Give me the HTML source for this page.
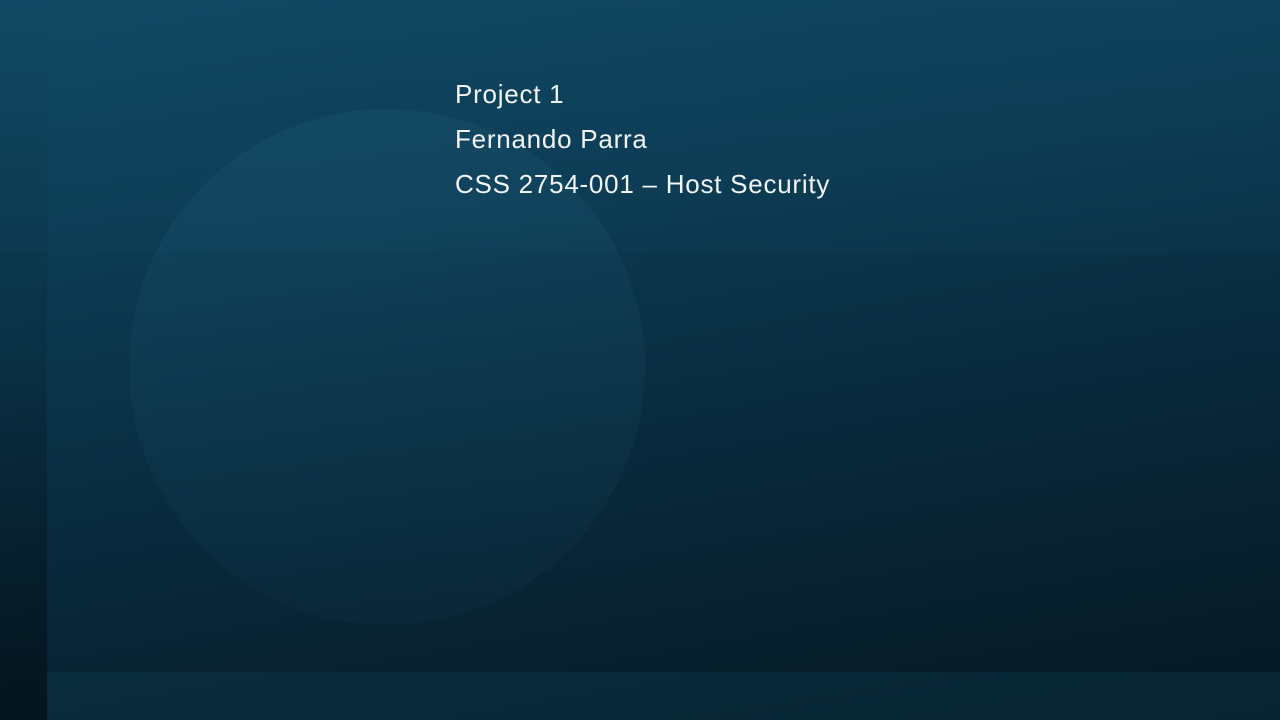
<!DOCTYPE html>
<html><head><style>
html,body{margin:0;padding:0}
body{width:1280px;height:720px;position:relative;overflow:hidden;
background:linear-gradient(170deg,#0f4660 0%,#0c3a52 30%,#092c40 55%,#07202e 80%,#061822 100%);
font-family:"Liberation Sans",sans-serif}
.top{position:absolute;left:0;top:0;width:1280px;height:253px;background:linear-gradient(180deg,rgba(20,80,110,0.25),rgba(20,80,110,0.10))}
.circ{position:absolute;left:129px;top:109px;width:516px;height:516px;border-radius:50%;
background:linear-gradient(180deg,rgba(40,110,140,0.16),rgba(30,90,120,0.07))}
.bot{position:absolute;left:47px;top:672px;width:1233px;height:48px;background:rgba(20,80,105,0.22)}
.left{position:absolute;left:0;top:0;width:47px;height:720px;background:linear-gradient(180deg,rgba(0,0,0,0.0),rgba(0,0,0,0.1) 50%,rgba(0,0,0,0.4))}
.t{position:absolute;left:455px;color:#f2f4f5;font-size:26px;line-height:30px;white-space:nowrap;letter-spacing:0.75px}
</style></head><body>
<div class="top"></div>
<div class="circ"></div>
<div class="bot"></div>
<div class="left"></div>
<div class="t" style="top:79px">Project 1</div>
<div class="t" style="top:124px">Fernando Parra</div>
<div class="t" style="top:169px">CSS 2754-001 – Host Security</div>
</body></html>
